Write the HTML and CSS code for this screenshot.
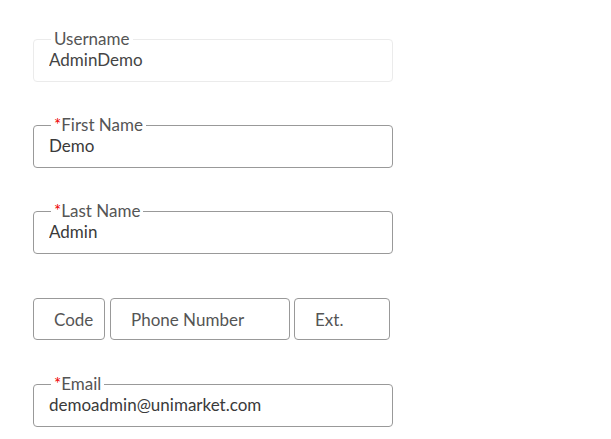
FILE: index.html
```html
<!DOCTYPE html>
<html lang="en">
<head>
    <meta charset="UTF-8">
    <meta name="viewport" content="width=device-width, initial-scale=1.0">
    <title>Profile</title>
    <link rel="stylesheet" href="styles.css">
</head>
<body>
    <form class="profile-form">
        <fieldset class="field field-disabled">
            <legend>Username</legend>
            <input type="text" value="AdminDemo" disabled>
        </fieldset>
        <fieldset class="field">
            <legend><span class="req">*</span>First Name</legend>
            <input type="text" value="Demo">
        </fieldset>
        <fieldset class="field">
            <legend><span class="req">*</span>Last Name</legend>
            <input type="text" value="Admin">
        </fieldset>
        <div class="phone-row">
            <input type="text" class="phone-code" placeholder="Code">
            <input type="text" class="phone-number" placeholder="Phone Number">
            <input type="text" class="phone-ext" placeholder="Ext.">
        </div>
        <fieldset class="field field-last">
            <legend><span class="req">*</span>Email</legend>
            <input type="text" value="demoadmin@unimarket.com">
        </fieldset>
    </form>
</body>
</html>
```

FILE: styles.css
```css
body {
    margin: 0;
    font-family: Lato, "Open Sans", sans-serif;
    font-size: 17px;
    color: #444;
    background-color: white;
}
.profile-form {
    width: 360px;
    padding: 30px 0 0 33px;
    display: flex;
    flex-direction: column;
    gap: 34px;
}
.field {
    margin: 0;
    padding: 0 15px 10px;
    border: 1px solid #999;
    border-radius: 4px;
    min-width: 0;
}
.field-last {
    margin-top: 1px;
}
.field legend {
    margin-left: 2px;
    padding: 0 3px;
    color: #555;
    font-size: 17px;
    line-height: 18px;
}
.field-disabled {
    border-color: #ebebeb;
}
.req {
    color: #e00;
}
.field input {
    width: 100%;
    border: none;
    padding: 0;
    height: 23px;
    font-family: inherit;
    font-size: 17px;
    color: #3a3a3a;
    background: none;
    outline: none;
}
.field-disabled input {
    color: #444;
}
.phone-row {
    display: flex;
    margin-top: 10px;
}
.phone-row input {
    box-sizing: border-box;
    flex: none;
    height: 42px;
    border: 1px solid #999;
    border-radius: 4px;
    padding: 0 0 0 20px;
    font-family: inherit;
    font-size: 17px;
    color: #333;
    outline: none;
}
.phone-row input::placeholder {
    color: #555;
}
.phone-code {
    width: 72px;
}
.phone-number {
    width: 180px;
    margin-left: 5px;
}
.phone-ext {
    width: 96px;
    margin-left: 4px;
}
```
